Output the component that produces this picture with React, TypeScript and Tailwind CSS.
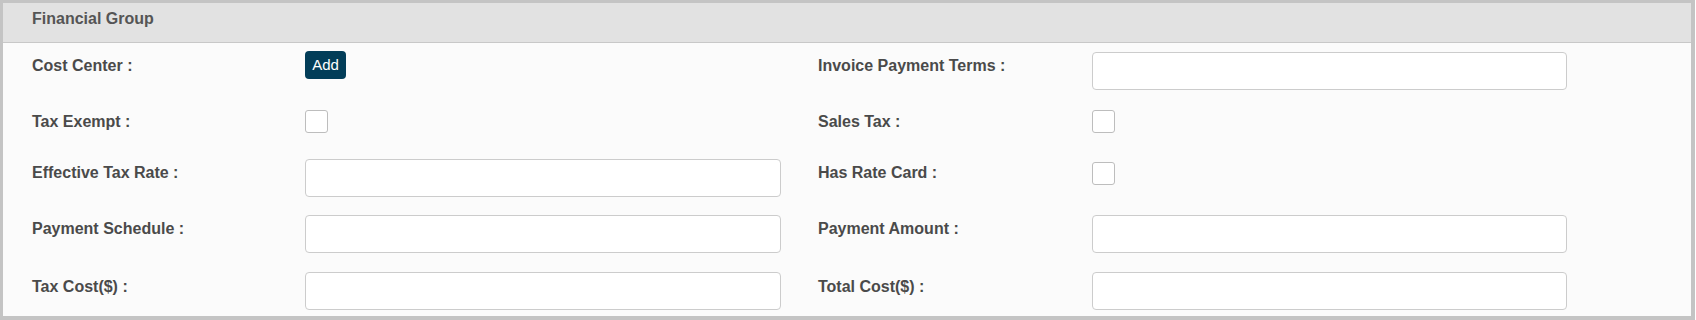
import React from 'react';

type Control = 'input' | 'checkbox' | 'button';

type Field = {
  label: string;
  control: Control;
  offset?: string;
};

type Row = {
  height: string;
  leading: string;
  left: Field;
  right: Field;
};

const rows: Row[] = [
  {
    height: 'h-[59px]',
    leading: 'leading-[30px]',
    left: { label: 'Cost Center :', control: 'button' },
    right: { label: 'Invoice Payment Terms :', control: 'input', offset: 'mt-px' },
  },
  {
    height: 'h-[49px]',
    leading: 'leading-[24px]',
    left: { label: 'Tax Exempt :', control: 'checkbox' },
    right: { label: 'Sales Tax :', control: 'checkbox' },
  },
  {
    height: 'h-[56px]',
    leading: 'leading-[28px]',
    left: { label: 'Effective Tax Rate :', control: 'input' },
    right: { label: 'Has Rate Card :', control: 'checkbox', offset: 'mt-[3px]' },
  },
  {
    height: 'h-[57px]',
    leading: 'leading-[28px]',
    left: { label: 'Payment Schedule :', control: 'input' },
    right: { label: 'Payment Amount :', control: 'input' },
  },
  {
    height: 'h-[44px]',
    leading: 'leading-[30px]',
    left: { label: 'Tax Cost($) :', control: 'input' },
    right: { label: 'Total Cost($) :', control: 'input' },
  },
];

function FieldControl({ field, wide }: { field: Field; wide: string }) {
  if (field.control === 'button') {
    return (
      <button
        type="button"
        className="h-[28px] w-[41px] rounded-[4px] bg-[#023d58] text-[15px] leading-[28px] text-white"
      >
        Add
      </button>
    );
  }
  if (field.control === 'checkbox') {
    return (
      <div className={`h-[23px] w-[23px] rounded-[3px] border border-[#bdbdbd] bg-white ${field.offset ?? ''}`} />
    );
  }
  return (
    <input
      type="text"
      className={`h-[38px] ${wide} rounded-[4px] border border-[#cccccc] bg-white px-3 outline-none ${field.offset ?? ''}`}
    />
  );
}

export default function App() {
  return (
    <div
      className="h-[320px] w-[1695px] border-[3px] border-r-4 border-b-4 border-[#c4c4c4] bg-[#fbfbfb]"
      style={{ fontFamily: '"Liberation Sans", Arial, sans-serif' }}
    >
      <div className="h-[40px] border-b border-[#c8c8c8] bg-[#e2e2e2] pl-[29px] pt-[6px] text-[16px] font-bold leading-[20px] text-[#555555]">
        Financial Group
      </div>
      <div className="pt-[8px] pl-[29px]">
        {rows.map((row) => (
          <div key={row.left.label} className={`flex items-start ${row.height}`}>
            <div className={`w-[273px] text-[16px] font-bold text-[#4a4a4a] ${row.leading}`}>{row.left.label}</div>
            <div className="w-[513px]">
              <FieldControl field={row.left} wide="w-[476px]" />
            </div>
            <div className={`w-[274px] text-[16px] font-bold text-[#4a4a4a] ${row.leading}`}>{row.right.label}</div>
            <div className="w-[475px]">
              <FieldControl field={row.right} wide="w-[475px]" />
            </div>
          </div>
        ))}
      </div>
    </div>
  );
}
